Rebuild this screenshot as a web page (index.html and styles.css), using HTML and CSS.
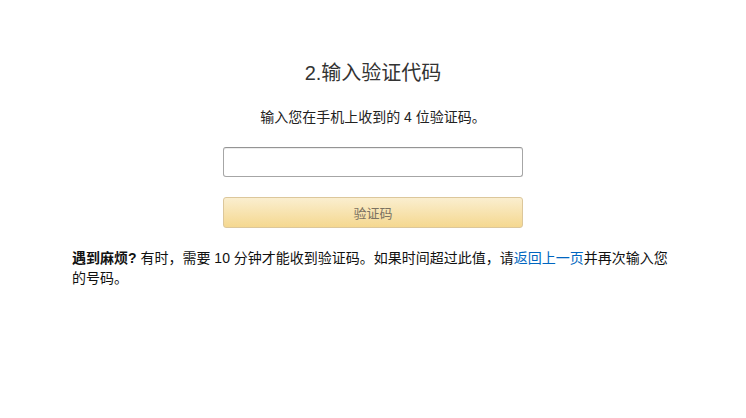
FILE: index.html
```html
<!DOCTYPE html>
<html lang="zh-CN">
<head>
<meta charset="utf-8">
<title>输入验证代码</title>
<link rel="stylesheet" href="styles.css">
</head>
<body>
<div class="page">
  <h1 class="title">2.输入验证代码</h1>
  <p class="subtitle">输入您在手机上收到的 4 位验证码。</p>
  <div class="form">
    <input class="code-input" type="text">
    <button class="submit" type="button">验证码</button>
  </div>
  <p class="help"><b>遇到麻烦?</b> 有时，需要 10 分钟才能收到验证码。如果时间超过此值，请<a class="link" href="#">返回上一页</a>并再次输入您的号码。</p>
</div>
</body>
</html>
```
FILE: styles.css
```css
html, body {
  margin: 0;
  padding: 0;
  background: #fff;
}
body {
  font-family: "Liberation Sans", "Noto Sans CJK SC", sans-serif;
  color: #111;
}
.page {
  width: 602px;
  margin: 0 auto;
  padding-top: 59px;
  display: flex;
  flex-direction: column;
  align-items: center;
}
.title {
  margin: 0;
  font-size: 20px;
  line-height: 28px;
  font-weight: 400;
  color: #333;
}
.subtitle {
  margin: 20px 0 0;
  font-size: 14px;
  line-height: 20px;
  color: #222;
}
.form {
  margin-top: 20px;
  width: 300px;
  display: flex;
  flex-direction: column;
  gap: 20px;
}
.code-input {
  box-sizing: border-box;
  width: 300px;
  height: 30px;
  margin: 0;
  border: 1px solid #a6a6a6;
  border-top-color: #949494;
  border-radius: 3px;
  box-shadow: 0 1px 0 rgba(255,255,255,.5), 0 1px 0 rgba(0,0,0,.07) inset;
  background: #fff;
}
.submit {
  box-sizing: border-box;
  width: 300px;
  height: 31px;
  margin: 0;
  border: 1px solid #dcc79b;
  border-radius: 3px;
  background: linear-gradient(to bottom, #faeecf, #f5d890);
  font-family: inherit;
  font-size: 13px;
  color: #7b7262;
  padding: 0;
}
.help {
  align-self: stretch;
  margin: 20px 0 0;
  font-size: 14px;
  line-height: 20px;
  color: #111;
}
.help b {
  font-weight: 700;
}
.link {
  color: #0066c0;
  text-decoration: none;
}
```
